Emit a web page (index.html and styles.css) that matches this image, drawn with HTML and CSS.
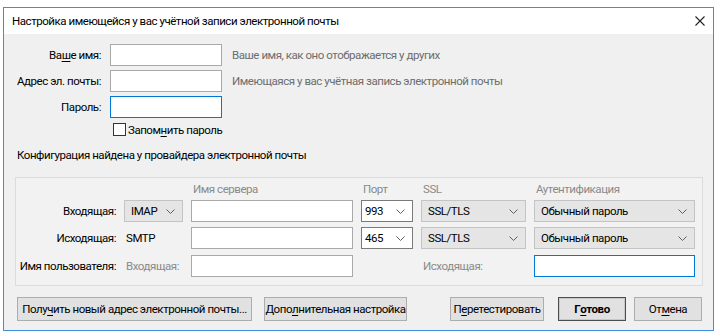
FILE: index.html
```html
<!DOCTYPE html>
<html lang="ru">
<head>
<meta charset="utf-8">
<link rel="stylesheet" href="styles.css">
</head>
<body>
<div class="window">
  <div class="titlebar">
    <span class="title">Настройка имеющейся у вас учётной записи электронной почты</span>
    <svg class="close" width="10" height="10" viewBox="0 0 10 10"><path d="M0.5 0.5 L9.5 9.5 M9.5 0.5 L0.5 9.5" stroke="#222" stroke-width="1.1" fill="none"/></svg>
  </div>
  <div class="body">
    <div class="account">
      <label class="lbl">Ва<u>ш</u>е имя:</label>
      <div class="input"></div>
      <span class="hint">Ваше имя, как оно отображается у других</span>
      <label class="lbl">Адрес эл. почты:</label>
      <div class="input"></div>
      <span class="hint">Имеющаяся у вас учётная запись электронной почты</span>
      <label class="lbl">Пароль:</label>
      <div class="input focus"></div>
      <span></span>
    </div>
    <div class="remember">
      <span class="checkbox"></span>
      <span>Запом<u>н</u>ить пароль</span>
    </div>
    <div class="found">Конфигурация найдена у провайдера электронной почты</div>
    <div class="group">
      <div class="grow head">
        <span></span><span></span>
        <span class="colh">Имя сервера</span>
        <span class="colh">Порт</span>
        <span class="colh">SSL</span>
        <span class="colh">Аутентификация</span>
      </div>
      <div class="grow">
        <span class="glbl">Входящая:</span>
        <div class="select gray"><span>IMAP</span><svg class="chev" width="9" height="5" viewBox="0 0 9 5"><path d="M0.5 0.5 L4.5 4.5 L8.5 0.5" stroke="#606060" fill="none"/></svg></div>
        <div class="input"></div>
        <div class="select white"><span>993</span><svg class="chev" width="9" height="5" viewBox="0 0 9 5"><path d="M0.5 0.5 L4.5 4.5 L8.5 0.5" stroke="#606060" fill="none"/></svg></div>
        <div class="select gray"><span>SSL/TLS</span><svg class="chev" width="9" height="5" viewBox="0 0 9 5"><path d="M0.5 0.5 L4.5 4.5 L8.5 0.5" stroke="#606060" fill="none"/></svg></div>
        <div class="select gray"><span>Обычный пароль</span><svg class="chev" width="9" height="5" viewBox="0 0 9 5"><path d="M0.5 0.5 L4.5 4.5 L8.5 0.5" stroke="#606060" fill="none"/></svg></div>
      </div>
      <div class="grow r2">
        <span class="glbl">Исходящая:</span>
        <span class="plain">SMTP</span>
        <div class="input"></div>
        <div class="select white"><span>465</span><svg class="chev" width="9" height="5" viewBox="0 0 9 5"><path d="M0.5 0.5 L4.5 4.5 L8.5 0.5" stroke="#606060" fill="none"/></svg></div>
        <div class="select gray"><span>SSL/TLS</span><svg class="chev" width="9" height="5" viewBox="0 0 9 5"><path d="M0.5 0.5 L4.5 4.5 L8.5 0.5" stroke="#606060" fill="none"/></svg></div>
        <div class="select gray"><span>Обычный пароль</span><svg class="chev" width="9" height="5" viewBox="0 0 9 5"><path d="M0.5 0.5 L4.5 4.5 L8.5 0.5" stroke="#606060" fill="none"/></svg></div>
      </div>
      <div class="grow r3">
        <span class="glbl">Имя пользователя:</span>
        <span class="plain dim">Входящая:</span>
        <div class="input"></div>
        <span></span>
        <span class="plain dim">Исходящая:</span>
        <div class="input focus"></div>
      </div>
    </div>
    <div class="buttons">
      <div class="btn b1">Полу<u>ч</u>ить новый адрес электронной почты...</div>
      <div class="btn b2">Допо<u>л</u>нительная настройка</div>
      <div class="spacer"></div>
      <div class="btn b3">П<u>е</u>ретестировать</div>
      <div class="btn b4 default">Г<u>о</u>тово</div>
      <div class="btn b5">От<u>м</u>ена</div>
    </div>
  </div>
</div>
</body>
</html>
```

FILE: styles.css
```css
* { box-sizing: border-box; }
html, body { margin: 0; padding: 0; background: #ffffff; }
body {
  font-family: Roboto, "Noto Sans", sans-serif;
  font-size: 11.5px;
  letter-spacing: -0.45px;
  color: #000;
  width: 720px;
  height: 336px;
  overflow: hidden;
}
u { text-decoration: underline; text-underline-offset: 2px; }

.window {
  margin: 7px 0 0 3px;
  width: 711px;
  height: 324px;
  border: 1px solid #3b8fdc;
  display: flex;
  flex-direction: column;
}
.titlebar {
  height: 26px;
  background: #fff;
  display: flex;
  align-items: center;
  padding-left: 8px;
  padding-right: 8px;
}
.title { flex: 1; line-height: 16px; }

.body {
  flex: 1;
  background: #f0f0f0;
  display: flex;
  flex-direction: column;
  padding-top: 10px;
}

.account {
  display: grid;
  grid-template-columns: 97px 121px 1fr;
  grid-auto-rows: 22px;
  row-gap: 4px;
  align-items: center;
}
.lbl { text-align: right; white-space: nowrap; }
.account .input { margin-left: 9px; }
.hint { color: #6d6d6d; margin-left: 10px; white-space: nowrap; }

.input {
  height: 22px;
  background: #fff;
  border: 1px solid #a9a9a9;
}
.input.focus { border-color: #0078d7; }

.remember {
  display: flex;
  align-items: center;
  margin-top: 5px;
  margin-left: 109px;
  height: 13px;
  gap: 2px;
}
.checkbox {
  width: 13px;
  height: 13px;
  border: 1px solid #333;
  background: #fff;
}

.found {
  margin-top: 11px;
  padding-left: 13px;
  line-height: 16px;
}

.group {
  margin: 14px 0 0 11px;
  width: 688px;
  border: 1px solid #dcdcdc;
  background: #f2f2f2;
  padding: 3px 0 8px 0;
  display: flex;
  flex-direction: column;
}
.grow {
  display: grid;
  grid-template-columns: 100px 59px 162px 52px 105px 161px;
  column-gap: 8px;
  height: 22px;
  align-items: center;
}
.grow.head { height: 16px; margin-bottom: 3px; }
.grow.r2 { margin-top: 5px; }
.grow.r3 { margin-top: 6px; }
.colh { color: #8a8a8a; padding-left: 2px; line-height: 16px; white-space: nowrap; }
.glbl { text-align: right; white-space: nowrap; }
.plain { padding-left: 2px; white-space: nowrap; }
.dim { color: #8a8a8a; }

.select {
  height: 22px;
  display: flex;
  align-items: center;
  justify-content: space-between;
  padding: 0 7px 0 6px;
  white-space: nowrap;
}
.select.gray { background: #e5e5e5; border: 1px solid #c4c4c4; }
.select.white { background: #fff; border: 1px solid #7a7a7a; padding-left: 3px; }

.buttons {
  display: flex;
  margin-top: 11px;
  padding-left: 13px;
  padding-right: 11px;
  height: 24px;
}
.spacer { flex: 1; }
.btn {
  height: 24px;
  background: #e1e1e1;
  border: 1px solid #adadad;
  display: flex;
  align-items: center;
  justify-content: center;
  white-space: nowrap;
}
.b1 { width: 235px; }
.b2 { width: 143px; margin-left: 12px; }
.b3 { width: 94px; }
.b4 { width: 68px; margin-left: 14px; font-weight: bold; border-color: #4d4d4d; box-shadow: inset 0 0 0 1px #c8c8c8; }
.b5 { width: 68px; margin-left: 8px; }
```
